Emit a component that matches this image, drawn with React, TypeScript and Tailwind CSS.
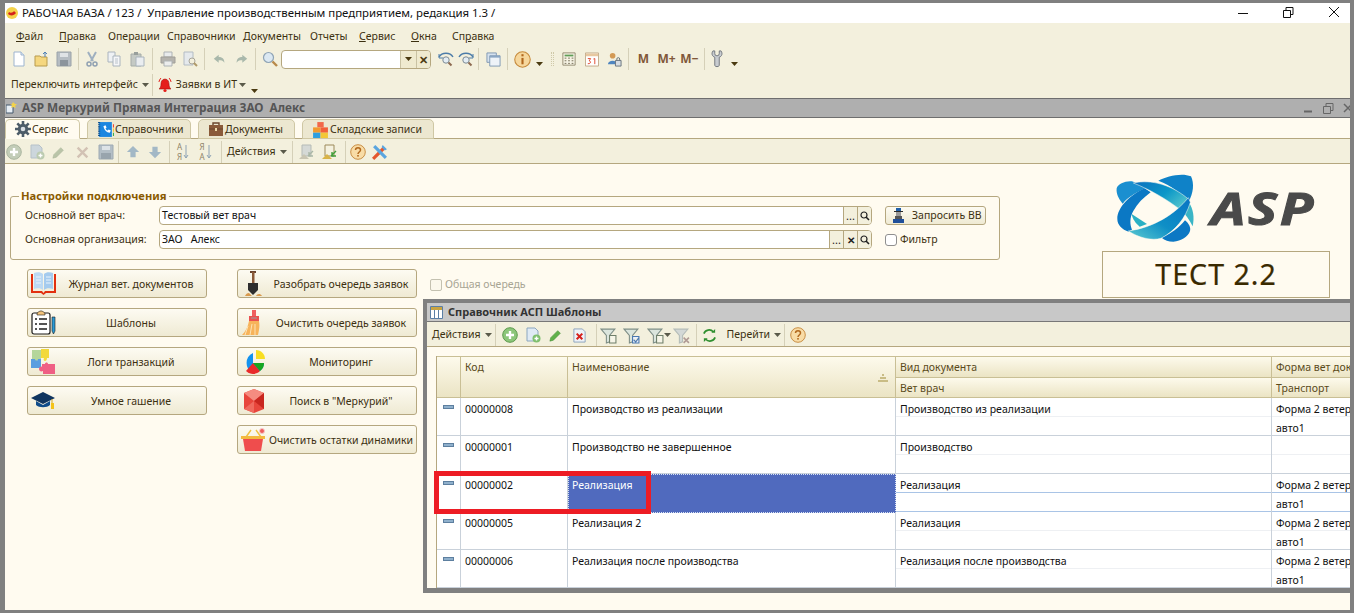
import type { ReactNode } from "react";

const Caret = ({ dark }: { dark?: boolean }) => (
  <svg width="7" height="4" viewBox="0 0 7 4" className="shrink-0">
    <path d="M0 0h7L3.5 4z" fill={dark ? "#4a3a10" : "#5a5a4a"} />
  </svg>
);

const Sep = () => <div className="mx-[3px] h-[22px] w-px shrink-0 bg-[#d5d0b8]" />;

function Ic({ w = 16, children, box = "0 0 16 16", h }: { w?: number; h?: number; box?: string; children: ReactNode }) {
  return (
    <svg width={w} height={h ?? w} viewBox={box} className="shrink-0">
      {children}
    </svg>
  );
}

function Slot({ w, children }: { w: number; children: ReactNode }) {
  return (
    <div className="flex h-full shrink-0 items-center justify-center" style={{ width: w }}>
      {children}
    </div>
  );
}

const IconNew = () => (
  <Ic>
    <path d="M3 1h7l3 3v11H3z" fill="#fff" stroke="#9db4cf" />
    <path d="M10 1v3h3" fill="#dde7f2" stroke="#9db4cf" />
  </Ic>
);
const IconOpen = () => (
  <Ic>
    <path d="M1 5h5l1 1h6v9H1z" fill="#f5d77f" stroke="#b79b4f" />
    <path d="M11 1v5M9 3l2-2 2 2" stroke="#4c7fb5" fill="none" />
  </Ic>
);
const IconSave = () => (
  <Ic>
    <path d="M1 1h14v14H1z" fill="#b5bcc2" stroke="#9aa2a8" />
    <path d="M4 2h8v4H4z" fill="#dfe3e6" />
    <path d="M4 9h8v6H4z" fill="#8c959c" />
  </Ic>
);
const IconCut = () => (
  <Ic>
    <path d="M4 1l5 9M12 1L7 10" stroke="#9fb0c0" strokeWidth="2" />
    <circle cx="5" cy="13" r="2" fill="none" stroke="#8fa0b2" strokeWidth="1.5" />
    <circle cx="11" cy="13" r="2" fill="none" stroke="#8fa0b2" strokeWidth="1.5" />
  </Ic>
);
const IconCopy = () => (
  <Ic>
    <path d="M2 1h7v10H2z" fill="#eef1f4" stroke="#aab4bd" />
    <path d="M7 5h7v10H7z" fill="#f5f6f8" stroke="#aab4bd" />
    <path d="M9 8h3M9 10h3M9 12h3" stroke="#b9c2ca" />
  </Ic>
);
const IconPaste = () => (
  <Ic>
    <path d="M2 3h10v12H2z" fill="#c4c9c4" stroke="#a5aca8" />
    <path d="M5 1h4v3H5z" fill="#989f9c" />
    <path d="M7 6h8v9H7z" fill="#eaedf0" stroke="#aab4bd" />
  </Ic>
);
const IconPrint = () => (
  <Ic>
    <path d="M4 1h8v5H4z" fill="#e9ebec" stroke="#aeb3b5" />
    <path d="M1 6h14v6H1z" fill="#b5b3ad" stroke="#a09e98" />
    <path d="M4 10h8v5H4z" fill="#eceded" stroke="#aeb3b5" />
  </Ic>
);
const IconPreview = () => (
  <Ic>
    <path d="M2 1h9v13H2z" fill="#e5e9ec" stroke="#b3bcc4" />
    <circle cx="10" cy="10" r="3" fill="#f3f0dd" stroke="#a8a59a" />
    <path d="M12 12l3 3" stroke="#b09a6a" strokeWidth="2" />
  </Ic>
);
const IconUndo = () => (
  <Ic w={13}>
    <path d="M1 7l6-5v3c4 0 7 2 7 7-2-3-4-3-7-3v3z" fill="#a9b8ab" />
  </Ic>
);
const IconRedo = () => (
  <Ic w={13}>
    <path d="M15 7L9 2v3c-4 0-7 2-7 7 2-3 4-3 7-3v3z" fill="#a9b8ab" />
  </Ic>
);
const IconSearch = () => (
  <Ic>
    <circle cx="6.5" cy="6.5" r="5" fill="#dbe8f2" stroke="#8fa4b5" strokeWidth="1.2" />
    <path d="M10.5 10.5l4.5 4.5" stroke="#b88a4a" strokeWidth="2.4" />
  </Ic>
);
const IconEyeSearch = ({ flip }: { flip?: boolean }) => (
  <Ic>
    <g transform={flip ? "matrix(-1 0 0 1 16 0)" : undefined}>
      <path d="M1 6c3-5 11-5 14 0" fill="none" stroke="#4c7ca8" strokeWidth="1.4" />
      <path d="M1 3v4h4" fill="none" stroke="#4c7ca8" />
    </g>
    <circle cx="8" cy="9" r="3.2" fill="#e3edf4" stroke="#7d8b95" />
    <path d="M10.5 11.5l3 3" stroke="#8d6a50" strokeWidth="2" />
  </Ic>
);
const IconWindows = () => (
  <Ic w={15}>
    <path d="M1 1h10v10H1z" fill="#d6e2ee" stroke="#7e98b2" />
    <path d="M4 4h11v11H4z" fill="#eef3f8" stroke="#7e98b2" />
    <path d="M4 4h11v2H4z" fill="#8aa6c4" />
  </Ic>
);
const IconInfo = () => (
  <Ic w={17}>
    <circle cx="8" cy="8" r="7.3" fill="#f6d79c" stroke="#c58a3c" />
    <rect x="7" y="3" width="2" height="2" fill="#b0661c" />
    <rect x="7" y="6.5" width="2" height="6" fill="#b0661c" />
  </Ic>
);
const IconCalc = () => (
  <Ic w={14}>
    <path d="M1 1h14v14H1z" fill="#f6f3e4" stroke="#8c8468" />
    <path d="M3 3h10v2H3z" fill="#5f9d57" />
    <path d="M3 7h2M7 7h2M11 7h2M3 10h2M7 10h2M11 10h2M3 13h2M7 13h2M11 13h2" stroke="#6a624a" />
  </Ic>
);
const IconCalendar = () => (
  <svg width="14" height="15" viewBox="0 0 15 15" className="shrink-0">
    <path d="M.5.5h14v14H.5z" fill="#fff" stroke="#c0a887" />
    <path d="M1 1h13v3H1z" fill="#e7c8a0" />
    <path d="M3 6.500h3L4.500 9c2 0 2 3.500-1.500 3M9 7l1.500-.5V12.500" fill="none" stroke="#e0452c" />
  </svg>
);
const IconUserLock = () => (
  <Ic w={15}>
    <circle cx="6" cy="4" r="3" fill="#d39a55" />
    <path d="M1 13c0-5 10-5 10 0z" fill="#4f86c0" />
    <path d="M9 9h6v6H9z" fill="#d8dde2" stroke="#68737c" />
    <path d="M10.5 9V7.5a1.5 1.5 0 013 0V9" fill="none" stroke="#68737c" />
  </Ic>
);
const IconWrench = () => (
  <svg width="12" height="18" viewBox="0 0 13 20" className="shrink-0">
    <path d="M2 1C0 4 1 7 4 8v9c0 2 5 2 5 0V8c3-1 4-4 2-7L9 1v3a2.500 2.500 0 01-5 0V1z" fill="#c8ccd0" stroke="#6c7278" />
  </svg>
);
const IconBell = () => (
  <Ic w={16}>
    <path d="M8 2c-3 0-4 3-4 5 0 3-1 4-2 5h12c-1-1-2-2-2-5 0-2-1-5-4-5z" fill="#e5201c" stroke="#a8120f" strokeWidth=".6" />
    <circle cx="8" cy="13.5" r="1.6" fill="#e5201c" />
    <path d="M2 5c0-1 1-3 2-4M14 5c0-1-1-3-2-4" fill="none" stroke="#e5201c" />
  </Ic>
);
const IconGear = () => (
  <Ic w={16}>
    <circle cx="8" cy="8" r="5.2" fill="#4d5c68" />
    <path d="M8 0v16M0 8h16M2.3 2.3l11.4 11.4M13.7 2.3L2.3 13.7" stroke="#4d5c68" strokeWidth="2.6" />
    <circle cx="8" cy="8" r="2.3" fill="#d8dde2" />
  </Ic>
);
const IconNotebook = () => (
  <Ic w={17}>
    <path d="M2 1h12v14H2z" fill="#1b86e0" />
    <path d="M2 1v14" stroke="#0d4f8f" strokeWidth="2" strokeDasharray="1 1" />
    <path d="M6 5c1 4 3 6 6 6l1-2-2-1-1 1c-1-.5-1.5-1-2-2l1-1-1-2z" fill="#fff" />
    <path d="M15 3h2v3h-2z" fill="#f04438" />
    <path d="M15 7h2v3h-2z" fill="#f6c633" />
    <path d="M15 11h2v3h-2z" fill="#3dad4c" />
  </Ic>
);
const IconBriefcase = () => (
  <Ic w={16}>
    <path d="M1 4h14v11H1z" fill="#8a5a3a" />
    <path d="M5 4V2h6v2" fill="none" stroke="#6b452c" strokeWidth="1.4" />
    <path d="M1 8h14" stroke="#6b452c" />
    <path d="M7 7h2v3H7z" fill="#eed9a8" />
  </Ic>
);
const IconBoxes = () => (
  <Ic w={17}>
    <path d="M5 1h6v5H5z" fill="#f2684a" />
    <path d="M1 6h7v5H1z" fill="#f29a2e" />
    <path d="M8 6h7v5H8z" fill="#f25f3a" />
    <path d="M1 11h7v5H1z" fill="#2e9fe0" />
    <path d="M8 11h7v5H8z" fill="#f3c737" />
  </Ic>
);
const IconPlus = ({ on }: { on?: boolean }) => (
  <Ic w={16}>
    <circle cx="8" cy="8" r="7.3" fill={on ? "#8cc67a" : "#c3cdb8"} stroke={on ? "#5d9a4e" : "#aab59f"} />
    <path d="M8 4v8M4 8h8" stroke="#fff" strokeWidth="2.4" />
  </Ic>
);
const IconDocPlus = ({ on }: { on?: boolean }) => (
  <Ic w={16}>
    <path d="M2 1h8l3 3v10H2z" fill={on ? "#dfeaf4" : "#ccd6dc"} stroke={on ? "#8ba6bf" : "#b6c1c8"} />
    <circle cx="11.5" cy="11.5" r="4" fill={on ? "#7fbf6e" : "#bccbb0"} />
    <path d="M11.5 9.5v4M9.5 11.5h4" stroke="#fff" strokeWidth="1.4" />
  </Ic>
);
const IconPencil = ({ on }: { on?: boolean }) => (
  <Ic w={14}>
    <path d="M2 11l8-8 3 3-8 8-4 1z" fill={on ? "#5fb04a" : "#b9c4a8"} stroke={on ? "#3f8a30" : "#a9b498"} strokeWidth=".6" />
  </Ic>
);
const IconCross = () => (
  <Ic w={13}>
    <path d="M2 2l12 12M14 2L2 14" stroke="#d2c2b4" strokeWidth="3" />
  </Ic>
);
const IconSaveOk = () => (
  <Ic w={16}>
    <path d="M1 1h14v14H1z" fill="#b3bec6" stroke="#9eaab3" />
    <path d="M4 2h8v4H4z" fill="#dde3e7" />
    <path d="M3 9h10v6H3z" fill="#98a4ad" />
  </Ic>
);
const IconArrow = ({ down }: { down?: boolean }) => (
  <Ic w={14}>
    <path d={down ? "M5 2h6v6h4l-7 7-7-7h4z" : "M8 1l7 7h-4v6H5V8H1z"} fill="#a3b8c6" />
  </Ic>
);
const IconSort = ({ top, bottom }: { top: string; bottom: string }) => (
  <div className="flex h-[20px] w-[18px] items-center justify-center">
    <div className="flex flex-col font-['Liberation_Serif',serif] text-[8px] leading-[10px] text-[#8f8468]">
      <span>{top}</span>
      <span>{bottom}</span>
    </div>
    <svg width="6" height="16" viewBox="0 0 6 16" className="ml-px">
      <path d="M3 1v13M1 11l2 3 2-3" fill="none" stroke="#8ea3b5" />
    </svg>
  </div>
);
const IconDocArrow = ({ on }: { on?: boolean }) => (
  <Ic w={16}>
    <path d="M4 1h9v11H4z" fill={on ? "#f4f1df" : "#d5d9d6"} stroke={on ? "#9c8a5a" : "#b5bbb6"} />
    <path d="M1 15l5-5 5 5z" fill={on ? "#d9b448" : "#c9c5b2"} />
    <path d="M15 7l-5 5M11 8v4h4" fill="none" stroke={on ? "#3f9e3a" : "#a9b6a6"} strokeWidth="1.4" />
  </Ic>
);
const IconHelp = () => (
  <svg width="16" height="16" viewBox="0 0 16 16" className="shrink-0">
    <circle cx="8" cy="8" r="7.3" fill="#f8dca6" stroke="#c98f45" />
    <path d="M5.5 6c0-3 5-3 5 0 0 2-2.500 2-2.500 4" fill="none" stroke="#b36a1f" strokeWidth="1.500" />
    <rect x="7.200" y="11" width="1.600" height="1.600" fill="#b36a1f" />
  </svg>
);
const IconTools = () => (
  <Ic w={17}>
    <path d="M2 14L12 4" stroke="#e4572e" strokeWidth="3" />
    <path d="M3 2l11 11" stroke="#5aa5df" strokeWidth="3" />
    <path d="M11 1l4 4-2 1-3-3z" fill="#5aa5df" />
  </Ic>
);
const IconFilter = ({ mark, off }: { mark?: string; off?: boolean }) => (
  <Ic w={17}>
    <path d="M1 2h13L9 8v6l-3 1V8z" fill={off ? "#d3d8d6" : "#dbe5dd"} stroke={off ? "#b4bcb8" : "#7d8d86"} />
    {mark === "lines" && <path d="M9 8h6v7H9z" fill="#f6f5e8" stroke="#6f7f6a" />}
    {mark === "check" && <path d="M9 9h6v6H9zM10 12l2 2 3-4" fill="#eaf1fa" stroke="#4a78b0" />}
    {off && <path d="M10 10l5 5M15 10l-5 5" stroke="#b09a94" strokeWidth="1.500" />}
  </Ic>
);
const IconRefresh = () => (
  <Ic w={15}>
    <path d="M2 6a6 6 0 0110-2M14 10A6 6 0 014 12" fill="none" stroke="#2f8f2f" strokeWidth="1.800" />
    <path d="M10 5h4V1zM6 11H2v4z" fill="#2f8f2f" />
  </Ic>
);
const IconDocX = () => (
  <Ic w={15}>
    <path d="M2 1h9l3 3v11H2z" fill="#eef2f7" stroke="#8ba2bd" />
    <path d="M5 6l6 6M11 6l-6 6" stroke="#d6201c" strokeWidth="2.200" />
  </Ic>
);

const IconBook = () => (
  <svg width="25" height="23" viewBox="0 0 25 23">
    <path d="M0 2h2v17h9l1.500 2 1.500-2h9V2h2v19H15l-2.500 2L10 21H0z" fill="#e2300f" />
    <path d="M3 1c3-1 7-1 9 1v16c-2-2-6-2-9-1z" fill="#bcd9f3" />
    <path d="M22 1c-3-1-7-1-9 1v16c2-2 6-2 9-1z" fill="#a5cbee" />
    <path d="M5 5h5M5 8h5M5 11h5M15 5h5M15 8h5M15 11h5" stroke="#eaf3fb" strokeWidth="1.200" />
  </svg>
);
const IconClipboard = () => (
  <svg width="25" height="25" viewBox="0 0 25 25">
    <rect x="1" y="3" width="18" height="21" rx="2" fill="#fff" stroke="#1c1c1c" strokeWidth="1.200" />
    <path d="M6 4c0-2 2-2 3-3h2c1 1 3 1 3 3v1H6z" fill="#f1c27a" stroke="#1c1c1c" strokeWidth=".6" />
    <path d="M4 9h2M4 14h2M4 19h2M8 9h8M8 14h8M8 19h8" stroke="#1c1c1c" strokeWidth="1.400" />
    <path d="M21 7h3v14l-1.500 3-1.500-3z" fill="#2a9ad6" stroke="#1c1c1c" strokeWidth=".6" />
  </svg>
);
const IconPuzzle = () => (
  <svg width="25" height="25" viewBox="0 0 25 25">
    <path d="M1 1h9v5c1-1 3 0 3 1s-2 2-3 1v3H6c1 1 0 2-1 2s-2-1-1-2H1z" fill="#a8d08d" opacity=".85" />
    <path d="M10 0h8v9h-2c0 2-1 3-2 3s-2-1-1-3h-3z" fill="#f2d93a" />
    <path d="M0 10h4c0 2 3 2 3 0h3v9H0z" fill="#5a9de0" />
    <path d="M11 15h3c0-2 3-2 3 0h7v10H12v-3c-2 1-4 0-4-2s2-3 3-2z" fill="#ef5f84" />
  </svg>
);
const IconCap = () => (
  <svg width="25" height="18" viewBox="0 0 25 18">
    <path d="M0 6l12-6 12 6-12 6z" fill="#10355f" />
    <path d="M5 9v4c3 3 11 3 14 0V9l-7 4z" fill="#0f4c8a" />
    <path d="M21 7v5" stroke="#d8a81e" />
    <rect x="20" y="11" width="3" height="6" fill="#f4c319" />
  </svg>
);
const IconShovel = () => (
  <svg width="18" height="26" viewBox="0 0 18 26">
    <rect x="5" y="0" width="6" height="2" fill="#6a4530" />
    <rect x="7" y="1" width="2.500" height="12" fill="#8b5a38" />
    <path d="M3 12h10v7l-5 5-5-5z" fill="#2e2e2e" />
    <path d="M0 25c1-2 2-3 4-3l3 3zM11 25c1-2 4-3 6 0z" fill="#d8994c" />
  </svg>
);
const IconBroom = () => (
  <svg width="23" height="25" viewBox="0 0 23 25">
    <path d="M10 0h4v7h-4z" fill="#ef5f5f" />
    <path d="M7 6h10v5H7z" fill="#ea5050" />
    <path d="M9 8h6" stroke="#9c9c9c" />
    <path d="M7 11h10c1 5 0 9-1 14H0c3-3 6-8 7-14z" fill="#f7b35a" />
    <path d="M6 16l-3 9M10 14l-2 11M13 14v11" stroke="#fce2b4" />
  </svg>
);
const IconPie = () => (
  <svg width="24" height="24" viewBox="0 0 24 24">
    <path d="M11 3v10h11c0 6-5 10-11 10A11 11 0 0111 3z" fill="#1292ee" />
    <path d="M11 13l-7 8c2 2 5 3 7 3s5-1 7-3z" fill="#e92a2a" />
    <path d="M11 13h11c0 3-1 6-4 8z" fill="#16a61f" />
    <path d="M14 0c5 0 9 4 9 9h-9z" fill="#f8de23" />
  </svg>
);
const IconGem = () => (
  <svg width="22" height="24" viewBox="0 0 22 24">
    <path d="M11 0l10 4v16l-10 4-10-4V4z" fill="#e8463c" />
    <path d="M11 0l10 4-10 8L1 4z" fill="#f58c80" />
    <path d="M11 12l10-8v16z" fill="#c8261f" />
    <path d="M11 12v12L1 20z" fill="#f06a5e" />
  </svg>
);
const IconBasket = () => (
  <svg width="25" height="24" viewBox="0 0 25 24">
    <circle cx="21" cy="3" r="2.500" fill="#ef5b5b" stroke="#f6c9c9" />
    <path d="M5 9l5-7M20 9l-5-7" stroke="#f0c040" strokeWidth="1.400" />
    <rect x="0" y="8" width="24" height="3" fill="#f3b93f" />
    <path d="M2 11h20l-2 12H4z" fill="#ef4d4d" />
  </svg>
);

function AspLogo() {
  return (
    <svg width="92" height="78" viewBox="0 0 276 234" className="shrink-0">
      <defs>
        <linearGradient id="bandA" x1="0" y1="0" x2="1" y2="0.6">
          <stop offset="0" stopColor="#0b6fbe" />
          <stop offset="0.6" stopColor="#0b97c8" />
          <stop offset="1" stopColor="#4cc0cc" />
        </linearGradient>
        <linearGradient id="bandB" x1="1" y1="0" x2="0" y2="1">
          <stop offset="0" stopColor="#0874c4" />
          <stop offset="0.55" stopColor="#0f8fc6" />
          <stop offset="1" stopColor="#5ccbd0" />
        </linearGradient>
      </defs>
      <path d="M145 35C170 22 215 10 243 22c10 22 8 50-8 78-20-25-50-50-90-65z" fill="#0f82c8" />
      <path d="M20 58c4-14 30-24 50-20l38 18c-28 14-55 28-70 48C26 90 18 74 20 58z" fill="#1a8fd0" />
      <path d="M236 100c14 20 18 45 12 72-10-20-22-36-34-48z" fill="#3ab5c6" />
      <path d="M155 206c28-12 52-30 70-52 12 10 18 22 15 32-6 18-26 30-50 32-14 0-26-4-35-12z" fill="#0c78c4" />
      <path d="M65 135l46 30-22 8c-12-10-22-24-24-38z" fill="#2ab0c4" />
      <path d="M104 58C60 78 22 115 22 150c0 18 14 32 34 38l10-6c-6-14-8-36 4-56 12-22 30-40 52-56z" fill="#0b78c4" />
      <path d="M70 42c55-12 115 6 165 48l-22 34C170 90 120 62 70 42z" fill="url(#bandA)" stroke="#fffbf0" strokeWidth="1.500" />
      <path d="M235 86c-40 50-105 90-180 100 30 20 70 30 98 22 42-22 74-60 88-108z" fill="url(#bandB)" stroke="#fffbf0" strokeWidth="1.500" />
    </svg>
  );
}

function MainToolbar() {
  return (
    <div className="mt-[3px] flex h-[20px] items-center pl-[3px]">
      <Slot w={22}><IconNew /></Slot>
      <Slot w={23}><IconOpen /></Slot>
      <Slot w={22}><IconSave /></Slot>
      <Sep />
      <Slot w={20}><IconCut /></Slot>
      <Slot w={23}><IconCopy /></Slot>
      <Slot w={24}><IconPaste /></Slot>
      <Sep />
      <Slot w={23}><IconPrint /></Slot>
      <Slot w={22}><IconPreview /></Slot>
      <Sep />
      <Slot w={22}><IconUndo /></Slot>
      <Slot w={22}><IconRedo /></Slot>
      <Sep />
      <Slot w={22}><IconSearch /></Slot>
      <div className="flex h-[19px] w-[150px] shrink-0 overflow-hidden rounded-[4px] border border-[#b5a77f] bg-white">
        <div className="flex-1" />
        <div className="flex w-[16px] items-center justify-center border-l border-[#c9c2a3] bg-[#efeacf]"><Caret dark /></div>
        <div className="flex w-[14px] items-center justify-center border-l border-[#c9c2a3] bg-[#efeacf] text-[11px] font-bold leading-none text-[#4a3a10]">✕</div>
      </div>
      <div className="w-[4px] shrink-0" />
      <Slot w={22}><IconEyeSearch /></Slot>
      <Slot w={18}><IconEyeSearch flip /></Slot>
      <Sep />
      <Slot w={22}><IconWindows /></Slot>
      <Sep />
      <Slot w={22}><IconInfo /></Slot>
      <div className="mt-[10px] flex w-[12px] shrink-0 justify-center"><Caret dark /></div>
      <div className="ml-[6px] mr-[3px] h-[14px] w-[3px] shrink-0 border-x border-dotted border-[#cfc9a8]" />
      <Slot w={23}><IconCalc /></Slot>
      <Slot w={23}><IconCalendar /></Slot>
      <Slot w={22}><IconUserLock /></Slot>
      <Sep />
      {["M", "M+", "M−"].map((m) => (
        <div key={m} className="flex h-full w-[23px] shrink-0 items-center justify-center text-[12px] font-bold text-[#80583a]">{m}</div>
      ))}
      <Sep />
      <Slot w={18}><IconWrench /></Slot>
      <div className="mt-[10px] flex w-[16px] shrink-0 justify-center"><Caret dark /></div>
    </div>
  );
}

const tabs = [
  { label: "Сервис", w: 75, icon: <IconGear />, active: true },
  { label: "Справочники", w: 104, icon: <IconNotebook /> },
  { label: "Документы", w: 97, icon: <IconBriefcase /> },
  { label: "Складские записи", w: 132, icon: <IconBoxes /> },
];

function SubToolbar() {
  return (
    <div className="flex h-[25px] items-center border-b border-[#b5a77f] bg-[#f3f0dd] pt-[2px]">
      <Slot w={18}><IconPlus /></Slot>
      <Slot w={28}><IconDocPlus /></Slot>
      <Slot w={16}><IconPencil /></Slot>
      <Slot w={30}><IconCross /></Slot>
      <Slot w={18}><IconSaveOk /></Slot>
      <Sep />
      <Slot w={22}><IconArrow /></Slot>
      <Slot w={22}><IconArrow down /></Slot>
      <Sep />
      <Slot w={20}><IconSort top="А" bottom="Я" /></Slot>
      <Slot w={25}><IconSort top="Я" bottom="А" /></Slot>
      <Sep />
      <div className="flex shrink-0 items-center gap-[4px] px-[2px] text-[#3c3010]">Действия <Caret /></div>
      <Sep />
      <Slot w={20}><IconDocArrow /></Slot>
      <Slot w={26}><IconDocArrow on /></Slot>
      <Sep />
      <Slot w={18}><IconHelp /></Slot>
      <Slot w={26}><IconTools /></Slot>
    </div>
  );
}

function FieldBtn({ children }: { children: ReactNode }) {
  return (
    <div className="flex w-[14px] items-center justify-center border-l border-[#b5a77f] bg-[#f3f0dd] text-[11px] leading-none text-[#222]">
      {children}
    </div>
  );
}

function Field({ value, width, clear }: { value: string; width: number; clear?: boolean }) {
  return (
    <div className="flex h-[19px] items-stretch overflow-hidden rounded-[4px] border border-[#b5a77f] bg-white" style={{ width }}>
      <div className="flex-1 whitespace-pre pl-[2px] text-[10.5px] leading-[17px] text-[#111]">{value}</div>
      <FieldBtn>...</FieldBtn>
      {clear && <FieldBtn><span className="text-[10px] font-bold">✕</span></FieldBtn>}
      <FieldBtn>
        <svg width="10" height="10" viewBox="0 0 10 10">
          <circle cx="4" cy="4" r="3" fill="none" stroke="#222" strokeWidth="1.200" />
          <path d="M6 6l3 3" stroke="#222" strokeWidth="1.600" />
        </svg>
      </FieldBtn>
    </div>
  );
}

function ActionButton({ label, icon }: { label: string; icon: ReactNode }) {
  return (
    <div className="flex h-[29px] w-[180px] items-center rounded-[3px] border border-[#b5a77f] bg-gradient-to-b from-[#fdfbf2] to-[#efead3] pl-[2px] text-[#3c3010]">
      <div className="flex w-[27px] shrink-0 justify-center">{icon}</div>
      <div className="flex-1 whitespace-nowrap pr-[1px] pt-[2px] text-center">{label}</div>
    </div>
  );
}

const leftButtons = [
  { label: "Журнал вет. документов", icon: <IconBook /> },
  { label: "Шаблоны", icon: <IconClipboard /> },
  { label: "Логи транзакций", icon: <IconPuzzle /> },
  { label: "Умное гашение", icon: <IconCap /> },
];

const rightButtons = [
  { label: "Разобрать очередь заявок", icon: <IconShovel /> },
  { label: "Очистить очередь заявок", icon: <IconBroom /> },
  { label: "Мониторинг", icon: <IconPie /> },
  { label: 'Поиск в "Меркурий"', icon: <IconGem /> },
  { label: "Очистить остатки динамики", icon: <IconBasket /> },
];

const rows = [
  { code: "00000008", name: "Производство из реализации", doc: "Производство из реализации", form: "Форма 2 ветеринарная", car: "авто1" },
  { code: "00000001", name: "Производство не завершенное", doc: "Производство", form: "", car: "" },
  { code: "00000002", name: "Реализация", doc: "Реализация", form: "Форма 2 ветеринарная", car: "авто1", selected: true },
  { code: "00000005", name: "Реализация 2", doc: "Реализация", form: "Форма 2 ветеринарная", car: "авто1" },
  { code: "00000006", name: "Реализация после производства", doc: "Реализация после производства", form: "Форма 2 ветеринарная", car: "авто1" },
];

const headCell = "bg-gradient-to-b from-[#fdfaec] to-[#ebe4c4]";

function TemplatesWindow() {
  return (
    <div className="absolute left-[418px] top-[135px] flex h-[294px] w-[927px] flex-col overflow-hidden border-[4px] border-b-[5px] border-r-0 border-[#808080] bg-[#fffbf0]">
      <div className="flex h-[19px] shrink-0 items-center gap-[5px] border-b border-[#777] bg-[#c8c8c8] pl-[3px] pt-px text-[11px] font-bold text-[#333]">
        <svg width="13" height="13" viewBox="0 0 13 13">
          <path d="M.5.500h12v12H.5z" fill="#fff" stroke="#5b7fa5" />
          <path d="M1 1h11v3H1z" fill="#c9a441" />
          <path d="M4.500 4v8M8.500 4v8" stroke="#5b7fa5" />
        </svg>
        Справочник АСП Шаблоны
      </div>
      <div className="flex h-[25px] shrink-0 items-center border-b border-[#b5a77f] bg-[#f3f0dd] pl-[5px] pt-[2px] text-[#3c3010]">
        <span className="mr-[4px]">Действия</span><Caret />
        <Sep />
        <Slot w={22}><IconPlus on /></Slot>
        <Slot w={24}><IconDocPlus on /></Slot>
        <Slot w={22}><IconPencil on /></Slot>
        <Slot w={26}><IconDocX /></Slot>
        <Sep />
        <Slot w={17}><IconFilter mark="lines" /></Slot>
        <Slot w={30}><IconFilter mark="check" /></Slot>
        <Slot w={17}><IconFilter mark="lines" /></Slot>
        <Caret />
        <Slot w={22}><IconFilter off /></Slot>
        <Sep />
        <Slot w={20}><IconRefresh /></Slot>
        <span className="ml-[7px] mr-[4px]">Перейти</span><Caret />
        <Sep />
        <Slot w={20}><IconHelp /></Slot>
      </div>
      <div className="ml-[9px] mt-[9px] border-l border-[#b5a77f] text-[#111]">
        <div className="grid h-[42px] grid-cols-[24px_107px_328px_376px_200px] border-y border-[#c9bf95]">
          <div className={`${headCell} border-r border-[#c9bf95]`} />
          <div className={`${headCell} border-r border-[#c9bf95] pl-[4px] pt-[3px] text-[#5a4a1a]`}>Код</div>
          <div className={`${headCell} relative border-r border-[#c9bf95] pl-[4px] pt-[3px] text-[#5a4a1a]`}>
            Наименование
            <svg width="12" height="8" viewBox="0 0 12 8" className="absolute right-[6px] top-[17px]">
              <path d="M5 0h2v2H5zM3 3h6v2H3zM1 6h10v2H1z" fill="#c9bc85" />
            </svg>
          </div>
          {[["Вид документа", "Вет врач"], ["Форма вет документа", "Транспорт"]].map(([a, b]) => (
            <div key={a} className="flex flex-col border-r border-[#c9bf95] text-[#5a4a1a]">
              <div className={`${headCell} h-[21px] whitespace-nowrap border-b border-[#c9bf95] pl-[4px] pt-[3px]`}>{a}</div>
              <div className={`${headCell} flex-1 pl-[4px] pt-[3px]`}>{b}</div>
            </div>
          ))}
        </div>
        {rows.map((r) => (
          <div key={r.code} className={`grid h-[38px] grid-cols-[24px_107px_328px_376px_200px] border-b bg-white ${r.selected ? "border-[#a9c4e6]" : "border-[#c9d1da]"}`}>
            <div className="border-r border-[#c9d1da] pl-[6px] pt-[7px]">
              <div className="h-[4px] w-[11px] border border-[#5d7f9f] bg-[#8fb0cc]" />
            </div>
            <div className="border-r border-[#c9d1da] pl-[4px] pt-[4px]">{r.code}</div>
            <div className={r.selected ? "border border-dotted border-[#d8e2f4] bg-[#506abe] pl-[3px] pt-[3px] text-white" : "border-r border-[#c9d1da] pl-[4px] pt-[4px]"}>{r.name}</div>
            {[[r.doc, ""], [r.form, r.car]].map(([a, b], i) => (
              <div key={i} className="flex flex-col whitespace-nowrap border-r border-[#c9d1da]">
                <div className={`h-[19px] border-b pl-[4px] pt-[4px] ${r.selected ? "border-[#a9c4e6]" : "border-[#eef0f3]"}`}>{a}</div>
                <div className="flex-1 pl-[4px] pt-[4px]">{b}</div>
              </div>
            ))}
          </div>
        ))}
      </div>
    </div>
  );
}

// [label, column width, index of the underlined letter]
const menu = [
  ["Файл", 43, 0],
  ["Правка", 49, 0],
  ["Операции", 59, -1],
  ["Справочники", 76, -1],
  ["Документы", 67, 0],
  ["Отчеты", 49, -1],
  ["Сервис", 52, 0],
  ["Окна", 41, 0],
  ["Справка", 60, 2],
] as const;

export default function App() {
  return (
    <div className="flex h-[613px] w-[1354px] overflow-hidden bg-[#808080] pb-[3px] pl-[5px] pr-[4px] pt-[3px] font-['Liberation_Sans',sans-serif] text-[10.5px]">
      <div className="flex min-w-0 flex-1 flex-col">
        <div className="flex h-[20px] shrink-0 items-center bg-white font-['Noto_Sans',sans-serif] text-[11.4px] text-[#111]">
          <svg width="12" height="12" viewBox="0 0 12 12" className="ml-[1px] mr-[4px]">
            <circle cx="6" cy="6" r="6" fill="#f4d24a" />
            <path d="M2 7c2 2 6 2 8-1L8 4C7 6 4 6 3 5z" fill="#d4221c" />
          </svg>
          <span className="whitespace-pre">РАБОЧАЯ БАЗА / 123 /  Управление производственным предприятием, редакция 1.3 /</span>
          <svg width="101" height="14" viewBox="0 0 101 14" className="ml-auto mr-[11px]">
            <path d="M0 7.500h10" stroke="#111" />
            <path d="M45.500 4.500h7v7h-7zM48 4V1.500h7v7h-2.500" fill="none" stroke="#111" />
            <path d="M91 1l10 10M101 1L91 11" stroke="#111" />
          </svg>
        </div>
        <div className="flex h-[75px] shrink-0 flex-col bg-[#f3f0dd] text-[#3c3010]">
          <div className="flex h-[23px] items-center pl-[11px] pt-[4px]">
            {menu.map(([m, w, u]) => (
              <div key={m} className="shrink-0" style={{ width: w }}>
                {u < 0 ? m : <>{m.slice(0, u)}<span className="underline">{m[u]}</span>{m.slice(u + 1)}</>}
              </div>
            ))}
          </div>
          <MainToolbar />
          <div className="mt-[5px] flex h-[20px] items-center pl-[6px] pt-[2px]">
            <span>Переключить интерфейс</span>
            <div className="ml-[4px]"><Caret /></div>
            <Sep />
            <Slot w={18}><IconBell /></Slot>
            <span className="ml-[2px]">Заявки в ИТ</span>
            <div className="ml-[2px]"><Caret /></div>
            <div className="ml-[5px] mt-[12px]"><Caret dark /></div>
          </div>
        </div>
        <div className="flex h-[20px] shrink-0 items-center border-y border-[#6e6e6e] bg-[#afafaf] pl-[1px] text-[11.800px] font-bold text-[#555]">
          <svg width="11" height="12" viewBox="0 0 11 12" className="mr-[5px]">
            <path d="M0 3h7v8H0z" fill="#e7eef5" stroke="#44586c" />
            <path d="M7 0l2 2 2 0-2 2 1 2-3-1-2 1 1-3-2-1h2z" fill="#f3d34a" />
          </svg>
          <span className="whitespace-pre">ASP Меркурий Прямая Интеграция ЗАО  Алекс</span>
          <svg width="46" height="13" viewBox="0 0 46 13" className="ml-auto">
            <path d="M0 9.500h8" stroke="#666" strokeWidth="2" />
            <path d="M19.500 4.500h7v7h-7zM22 4V1.500h7v7h-2" fill="none" stroke="#666" />
            <path d="M40 2l8 8M48 2l-8 8" stroke="#666" strokeWidth="1.500" />
          </svg>
        </div>
        <div className="flex h-[21px] shrink-0 items-end gap-[7px] border-b border-[#b5a77f] bg-[#fffbf0] text-[#3c3010]">
          {tabs.map((t) => (
            <div
              key={t.label}
              className={`-mb-px flex h-[20px] shrink-0 items-center gap-[1px] rounded-t-[5px] border border-[#cfc7a4] pl-[9px] ${t.active ? "border-b-[#fffbf0] bg-[#fffbf0]" : "bg-[#ece7d0]"}`}
              style={{ width: t.w }}
            >
              {t.icon}
              <span className="whitespace-nowrap pt-[2px]">{t.label}</span>
            </div>
          ))}
        </div>
        <SubToolbar />
        <div className="relative flex min-h-0 flex-1 bg-[#fffbf0] text-[#3c3010]">
          <div className="w-[997px] shrink-0 pl-[5px] pt-[25px]">
            <fieldset className="h-[71px] w-[990px] rounded-[3px] border border-[#b5a77f]">
              <legend className="ml-[8px] px-[2px] text-[11.200px] font-bold leading-[14px] text-[#8a5a00]">Настройки подключения</legend>
              <div className="mt-[3px] flex items-start pl-[14px]">
                <div className="w-[134px] shrink-0 leading-[19px]">Основной вет врач:</div>
                <Field value="Тестовый вет врач" width={713} />
                <div className="ml-[13px] flex h-[19px] w-[101px] items-center gap-[7px] whitespace-nowrap rounded-[3px] border border-[#b5a77f] bg-gradient-to-b from-[#fdfbf2] to-[#efead3] pl-[6px]">
                  <svg width="13" height="15" viewBox="0 0 13 15" className="shrink-0">
                    <path d="M4 0h5v3H4z" fill="#1f5fa8" />
                    <path d="M2 3h9v1H2z" fill="#2a2a2a" />
                    <path d="M4 4h5v4H4z" fill="#9a9a9a" />
                    <path d="M3 8h7v3H3z" fill="#555" />
                    <path d="M1 11h11v4H1z" fill="#1f4f9a" />
                  </svg>
                  Запросить ВВ
                </div>
              </div>
              <div className="mt-[5px] flex items-start pl-[14px]">
                <div className="w-[134px] shrink-0 leading-[19px]">Основная организация:</div>
                <Field value="ЗАО   Алекс" width={713} clear />
                <div className="ml-[13px] flex h-[19px] items-center gap-[3px]">
                  <div className="h-[12px] w-[12px] rounded-[3px] border border-[#8f8f8f] bg-white" />
                  Фильтр
                </div>
              </div>
            </fieldset>
            <div className="mt-[9px] flex pl-[17px]">
              <div className="flex flex-col gap-[10px]">
                {leftButtons.map((b) => <ActionButton key={b.label} {...b} />)}
              </div>
              <div className="ml-[30px] flex flex-col gap-[10px]">
                {rightButtons.map((b) => <ActionButton key={b.label} {...b} />)}
              </div>
              <div className="ml-[13px] mt-[10px] flex h-[12px] items-center gap-[3px] text-[#a8a594]">
                <div className="h-[12px] w-[12px] rounded-[2px] border border-[#c4c1b0] bg-[#fbf8ec]" />
                Общая очередь
              </div>
            </div>
          </div>
          <div className="ml-[100px] flex w-[228px] shrink-0 flex-col pt-[5px]">
            <div className="flex items-start pl-[8px]">
              <AspLogo />
              <span className="ml-[9px] mt-[13px] block origin-left scale-x-[1.25] whitespace-nowrap font-['DejaVu_Sans',sans-serif] text-[44px] font-bold italic leading-[52px] tracking-[2px] text-[#4a4a4a] [-webkit-text-stroke:1px_#4a4a4a]">ASP</span>
            </div>
            <div className="mt-[4px] flex h-[47px] items-center justify-center border border-[#b5a77f] text-[28.500px] tracking-[1px] text-[#3a2a00] [-webkit-text-stroke:0.2px_#3a2a00]">ТЕСТ 2.2</div>
          </div>
          <TemplatesWindow />
          <div className="pointer-events-none absolute left-[429px] top-[307px] h-[43px] w-[217px] border-[5px] border-[#ed1c24]" />
        </div>
      </div>
    </div>
  );
}
